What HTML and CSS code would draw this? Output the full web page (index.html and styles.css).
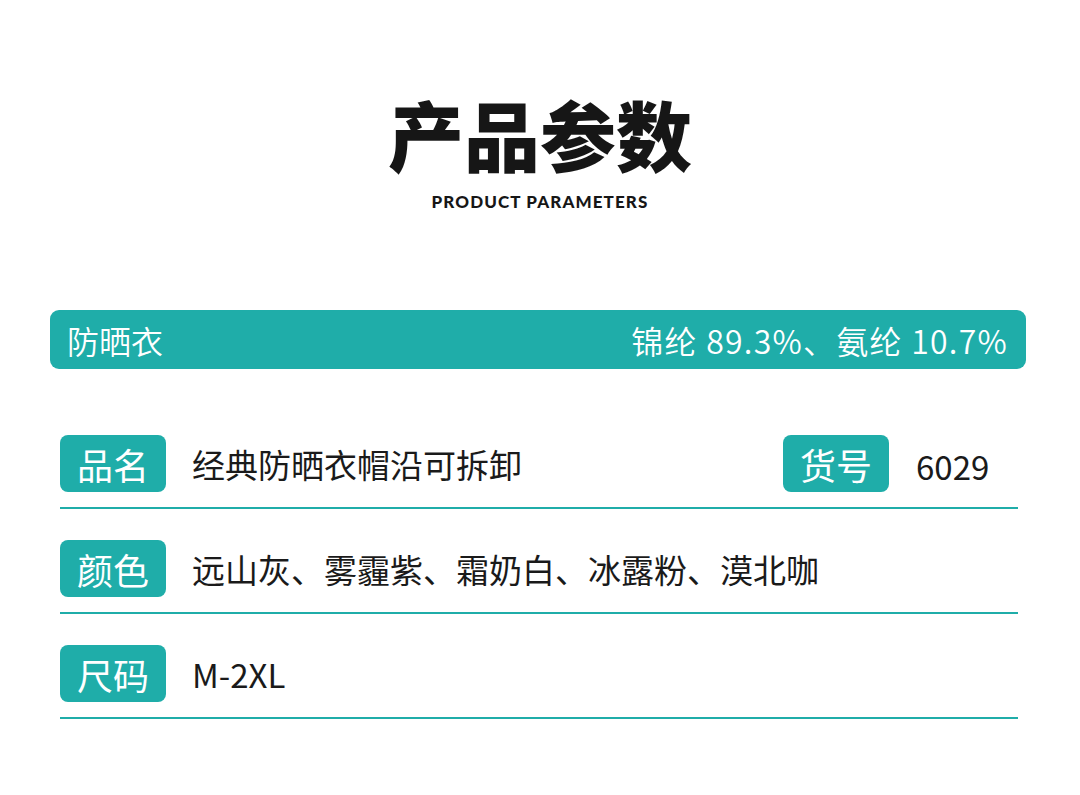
FILE: index.html
```html
<!DOCTYPE html>
<html lang="zh-CN">
<head>
<meta charset="utf-8">
<title>产品参数</title>
<link rel="stylesheet" href="styles.css">
</head>
<body>
<div class="page">
  <header class="head">
    <h1 class="title">产品参数</h1>
    <p class="subtitle">PRODUCT PARAMETERS</p>
  </header>
  <div class="banner">
    <span>防晒衣</span>
    <span class="comp">锦纶 89.3%、氨纶 10.7%</span>
  </div>
  <div class="rows">
    <div class="row">
      <span class="tag">品名</span>
      <span class="val grow">经典防晒衣帽沿可拆卸</span>
      <span class="tag">货号</span>
      <span class="val num">6029</span>
    </div>
    <div class="row">
      <span class="tag">颜色</span>
      <span class="val">远山灰、雾霾紫、霜奶白、冰露粉、漠北咖</span>
    </div>
    <div class="row">
      <span class="tag">尺码</span>
      <span class="val">M-2XL</span>
    </div>
  </div>
</div>
</body>
</html>
```
FILE: styles.css
```css
* { box-sizing: border-box; }
html, body { margin: 0; padding: 0; background: #fff; }
body {
  font-family: "Noto Sans CJK SC", "Noto Sans", sans-serif;
  color: #1a1a1a;
}
.page { width: 1080px; height: 795px; overflow: hidden; }
.head { padding-top: 87px; text-align: center; }
.title {
  margin: 0;
  font-size: 76px;
  line-height: 92px;
  font-weight: 900;
  color: #161616;
  letter-spacing: 0;
}
.subtitle {
  margin: 13px 0 0;
  font-family: "Lato", "Noto Sans", sans-serif;
  font-weight: 900;
  font-size: 17px;
  line-height: 20px;
  color: #161616;
  letter-spacing: 1.1px;
}
.banner {
  margin: 98px 0 0 50px;
  width: 976px;
  height: 59px;
  border-radius: 9px;
  background: #1fada9;
  color: #fff;
  display: flex;
  align-items: center;
  justify-content: space-between;
  padding: 0 19px 0 17px;
  font-size: 32px;
  font-weight: 350;
}
.comp { letter-spacing: 1.25px; margin-right: -1px; }
.rows {
  margin: 66px 0 0 60px;
  width: 958px;
  display: flex;
  flex-direction: column;
  gap: 31px;
}
.row {
  display: flex;
  align-items: center;
  padding-bottom: 15px;
  border-bottom: 2px solid #1fada9;
}
.tag {
  width: 106px;
  height: 57px;
  border-radius: 8px;
  background: #1fada9;
  color: #fff;
  font-size: 36px;
  display: flex;
  align-items: center;
  justify-content: center;
  line-height: 1;
  flex: none;
}
.val {
  margin-left: 26px;
  font-size: 33px;
  color: #1a1a1a;
  font-weight: 400;
}
.grow { flex: 1; }
.num { margin-left: 27px; width: 102px; padding-top: 4px; }
```
